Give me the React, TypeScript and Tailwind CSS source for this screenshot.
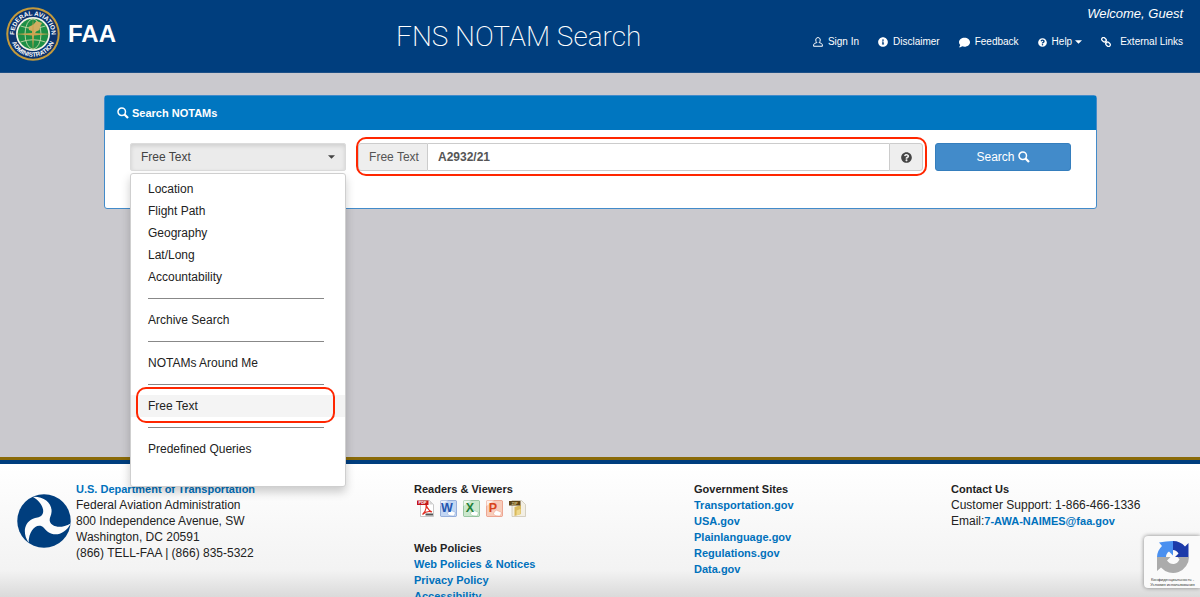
import { useState } from "react";
import type { ReactNode } from "react";
import { FaComment, FaInfoCircle, FaQuestionCircle } from "react-icons/fa";

const menuGroups = [
  ["Location", "Flight Path", "Geography", "Lat/Long", "Accountability"],
  ["Archive Search"],
  ["NOTAMs Around Me"],
  ["Free Text"],
  ["Predefined Queries"],
];

function FaaSeal() {
  return (
    <svg viewBox="0 0 108 108" className="size-[54px] shrink-0" aria-hidden="true">
      <defs>
        <path id="seal-top" d="M17 58a37.200 37.200 0 1 1 74 0" />
        <path id="seal-bottom" d="M8.500 54a45.500 45.500 0 0 0 91 0" />
      </defs>
      <circle cx="54" cy="54" r="53.500" fill="#c39a3c" />
      <circle cx="54" cy="54" r="49.500" fill="#0b3470" />
      <circle cx="54" cy="54" r="34" fill="#f4f3e6" />
      <circle cx="54" cy="54" r="30.500" fill="#1d8f45" />
      <g fill="none" stroke="#d8dfae" strokeWidth="1.600">
        <ellipse cx="54" cy="54" rx="16" ry="30" />
        <path d="M29 38q25 9 50 0M29 70q25-9 50 0" />
      </g>
      <path d="M45 40l10-5 6-7 11 4-4 8-1 6-7 3-4 7-4-8-6-2z" fill="#cfae62" />
      <path d="M54 22l2 30 34 2-34 3-2 31-2-31-34-3 34-2z" fill="#cba451" />
      <g fill="#ffffff" fontFamily="Liberation Sans, sans-serif" fontWeight="700" fontSize="12.500" textAnchor="middle">
        <text>
          <textPath href="#seal-top" startOffset="50%">FEDERAL AVIATION</textPath>
        </text>
        <text>
          <textPath href="#seal-bottom" startOffset="50%">ADMINISTRATION</textPath>
        </text>
      </g>
    </svg>
  );
}

function DotLogo() {
  return (
    <svg viewBox="-100 -100 200 200" className="size-[54px] shrink-0" aria-hidden="true">
      <circle r="99" fill="#003e7e" />
      <path
        fill="#fcfcfc"
        d="M-42-90C0-92 30-68 28-34C27-18 18-10 22 2C28 22 62 30 99 9C80 46 44 60 15 41C2 32 0 21-13 18C-33 13-57 39-57 81C-80 46-74 8-43-7C-29-14-18-11-9-20C5-35-5-69-42-90Z"
      />
    </svg>
  );
}

function SearchIcon({ className }: { className: string }) {
  return (
    <svg viewBox="0 0 24 24" className={className} fill="none" stroke="currentColor" aria-hidden="true">
      <circle cx="9.500" cy="9.500" r="7.500" strokeWidth="3" />
      <path d="M15 15l7 7" strokeWidth="4.500" />
    </svg>
  );
}

function UserIcon() {
  return (
    <svg viewBox="0 0 20 20" className="size-[10px]" fill="none" stroke="currentColor" strokeWidth="2" aria-hidden="true">
      <path d="M10 1.200c-2.800 0-4.500 2-4.500 4.800 0 2.300 1 4.200 2.300 5.100L3.500 12.600C2 13.300 1.200 14.500 1.200 18.500h17.600c0-4-.8-5.200-2.300-5.900l-4.300-1.500c1.300-.9 2.300-2.800 2.300-5.100 0-2.800-1.700-4.800-4.500-4.800z" />
    </svg>
  );
}

function LinkIcon() {
  return (
    <svg viewBox="0 0 20 20" className="size-[10px]" fill="none" stroke="currentColor" strokeWidth="2.400" aria-hidden="true">
      <rect x="1" y="2" width="10" height="7" rx="3.500" transform="rotate(45 6 5.500)" />
      <rect x="9" y="11" width="10" height="7" rx="3.500" transform="rotate(45 14 14.500)" />
      <path d="M7.500 7.500l5 5" />
    </svg>
  );
}

function Caret() {
  return (
    <svg viewBox="0 0 8 4" className="h-1 w-[7px]" fill="currentColor" aria-hidden="true">
      <path d="M0 0h8L4 4z" />
    </svg>
  );
}

function NavLink({ icon, children }: { icon: ReactNode; children: ReactNode }) {
  return (
    <a href="#" className="flex items-center gap-[5px] hover:underline">
      {icon}
      {children}
    </a>
  );
}

function OfficeIcon({ letter, color, tint }: { letter: string; color: string; tint: string }) {
  return (
    <svg viewBox="0 0 34 34" className="size-[17px]" aria-hidden="true">
      <rect x="1" y="1" width="32" height="32" rx="2" fill={tint} stroke={color} strokeOpacity="0.5" strokeWidth="1.500" />
      <path d="M1 33V12L16 1h-15z" fill="#fff" fillOpacity="0.7" />
      <path d="M15 27l5-7 11 5-3 7-10-1z" fill="#fff" stroke={color} strokeOpacity="0.4" />
      <text x="14" y="24" textAnchor="middle" fontFamily="Liberation Sans, sans-serif" fontWeight="700" fontSize="25" fill={color}>
        {letter}
      </text>
    </svg>
  );
}

function PdfIcon() {
  return (
    <svg viewBox="0 0 34 34" className="size-[17px]" aria-hidden="true">
      <path d="M7 1h18l8 8v24H7z" fill="#fff" stroke="#b5b5b5" strokeWidth="1.500" />
      <path d="M25 1v8h8z" fill="#d5d5d5" />
      <path d="M18 9c2 7 5 12 12 15-6-2-13-1-19 5 5-4 8-11 7-20z" fill="none" stroke="#e02b20" strokeWidth="2.200" />
      <rect x="0" y="1" width="23" height="9" fill="#c4161c" />
      <text x="11" y="8" textAnchor="middle" fontFamily="Liberation Sans, sans-serif" fontWeight="700" fontSize="8" fill="#fff">
        PDF
      </text>
      <rect x="17" y="27" width="15" height="4" fill="#555" />
    </svg>
  );
}

function ZipIcon() {
  return (
    <svg viewBox="0 0 34 34" className="size-[17px]" aria-hidden="true">
      <path d="M6 1h19l8 8v24H6z" fill="#f3efe4" stroke="#c9c3b2" strokeWidth="1.500" />
      <path d="M11 14l13-4v18l-13 4z" fill="#d9b95b" />
      <path d="M15 21l8-3v10l-8 3z" fill="#efd98e" />
      <rect x="0" y="2" width="23" height="9" fill="#5b4316" />
      <text x="11" y="9" textAnchor="middle" fontFamily="Liberation Sans, sans-serif" fontWeight="700" fontSize="8" fill="#d8c48c">
        ZIP
      </text>
    </svg>
  );
}

function RecaptchaBadge() {
  return (
    <aside className="absolute right-0 bottom-[9px] flex h-[52px] w-14 flex-col items-center rounded-l-sm bg-[#fafafa] pt-[5px] pl-px shadow-[0_0_4px_#808080]">
      <svg viewBox="0 0 64 64" className="size-8" aria-hidden="true">
        <path d="M0 32A32 32 0 0 1 10 10L4 3Q18 0 32 0V29L24 21Q18 25 18 32Z" fill="#4a90f0" />
        <path d="M32 0A32 32 0 0 1 56 11L63 4V32H36L43 25Q39 18 32 18Z" fill="#1c3aa9" />
        <path d="M0 32H27L20 39Q26 47 34 46Q41 45 45 37L41 32H64A32 32 0 0 1 8 53L0 60Z" fill="#ababab" />
      </svg>
      <p className="mt-1 text-center text-[4px] leading-[5px] whitespace-nowrap text-[#333]">
        Конфиденциальность -
        <br />
        Условия использования
      </p>
    </aside>
  );
}

function FooterLink({ children }: { children: ReactNode }) {
  return (
    <a href="#" className="block text-[11px] font-bold text-[#0071bc] hover:underline">
      {children}
    </a>
  );
}

function FooterHeading({ children }: { children: ReactNode }) {
  return <h2 className="text-[11px] leading-4 font-bold">{children}</h2>;
}

export default function App() {
  const [mode, setMode] = useState("Free Text");
  const [open, setOpen] = useState(true);
  const [query, setQuery] = useState("A2932/21");

  return (
    <div className="relative flex h-screen flex-col overflow-hidden bg-[#cac9ce] font-['Liberation_Sans',Arial,sans-serif] text-xs text-[#222]">
      <header className="flex h-[73px] shrink-0 border-b border-[#1c4f86] bg-[#003e7e] text-white">
        <div className="flex w-[33%] items-center gap-2 pb-[5px] pl-[6px]">
          <FaaSeal />
          <span className="text-2xl font-bold">FAA</span>
        </div>
        <h1 className="flex items-center pt-[2px] font-['Roboto',sans-serif] text-[28px] font-extralight whitespace-nowrap">FNS NOTAM Search</h1>
        <div className="ml-auto flex flex-col items-end gap-[11px] pt-[6px] pr-[17px]">
          <p className="text-[13px] leading-4 italic">Welcome, Guest</p>
          <nav className="flex gap-[19px] text-[10px] leading-[18px]">
            <NavLink icon={<UserIcon />}>Sign In</NavLink>
            <NavLink icon={<FaInfoCircle className="size-[10px]" />}>Disclaimer</NavLink>
            <NavLink icon={<FaComment className="size-[11px]" />}>Feedback</NavLink>
            <NavLink icon={<FaQuestionCircle className="size-[9px]" />}>
              <span className="flex items-center gap-[3px]">
                Help
                <Caret />
              </span>
            </NavLink>
            <NavLink icon={<LinkIcon />}>
              <span className="pl-1">External Links</span>
            </NavLink>
          </nav>
        </div>
      </header>

      <main className="h-[384px] shrink-0 pt-[22px] pr-[103px] pl-[104px]">
        <section className="rounded-[3px] border border-[#428bca] bg-white">
          <h2 className="flex h-[34px] items-center gap-[3px] bg-[#0076c0] pl-3 text-[11px] font-bold text-white">
            <SearchIcon className="size-3" />
            Search NOTAMs
          </h2>
          <form className="flex gap-[10px] px-[25px] pt-[13px] pb-[37px]" onSubmit={(e) => e.preventDefault()}>
            <div className="relative mr-[2px] w-[216px] shrink-0">
              <button
                type="button"
                aria-haspopup="menu"
                aria-expanded={open}
                onClick={() => setOpen(!open)}
                className="flex h-7 w-full items-center justify-between rounded-[2px] border border-[#dcdcdc] bg-[#ebebeb] px-[10px] text-[#444] shadow-[inset_0_2px_4px_rgba(0,0,0,0.12)]"
              >
                {mode}
                <Caret />
              </button>
              {open && (
                <div
                  role="menu"
                  className="absolute top-[30px] left-0 z-10 w-full rounded-[3px] border border-[#cfcfcf] bg-white pt-1 pb-[26px] shadow-[0_5px_10px_rgba(0,0,0,0.2)]"
                >
                  {menuGroups.map((group, i) => (
                    <div key={group[0]}>
                      {i > 0 && (
                        <div role="separator" className="flex h-[21px] items-center pr-[21px] pl-[17px]">
                          <div className="h-px w-full bg-[#888]" />
                        </div>
                      )}
                      {group.map((item) => (
                        <div key={item} className="relative">
                          <button
                            type="button"
                            role="menuitem"
                            onClick={() => {
                              setMode(item);
                              setOpen(false);
                            }}
                            className={
                              item === mode
                                ? "block h-[22px] w-full bg-[#f4f4f4] pl-[17px] text-left"
                                : "block h-[22px] w-full bg-white pl-[17px] text-left hover:bg-[#f4f4f4]"
                            }
                          >
                            {item}
                          </button>
                          {item === "Free Text" && (
                            <span className="pointer-events-none absolute -top-[8px] right-[10px] -bottom-[6px] left-[5px] rounded-[10px] border-2 border-[#ff2600]" />
                          )}
                        </div>
                      ))}
                    </div>
                  ))}
                </div>
              )}
            </div>

            <div className="relative flex h-7 min-w-0 flex-1 pr-[2px]">
              <label
                htmlFor="free-text"
                className="flex w-[70px] shrink-0 items-center justify-center rounded-l-[3px] border border-[#ccc] bg-[#eee] pl-[2px] text-[#555]"
              >
                Free Text
              </label>
              <input
                id="free-text"
                type="text"
                value={query}
                onChange={(e) => setQuery(e.target.value)}
                className="min-w-0 flex-1 border-y border-[#ccc] bg-white px-[10px] font-bold text-[#555] outline-none"
              />
              <button
                type="button"
                aria-label="Free text help"
                className="flex w-[34px] shrink-0 items-center justify-center rounded-r-[3px] border border-[#ccc] bg-[#eee] text-[#444]"
              >
                <FaQuestionCircle className="size-[11px]" />
              </button>
              <span className="pointer-events-none absolute -inset-x-[2px] -top-[6px] -bottom-[5px] rounded-[10px] border-2 border-[#ff2600]" />
            </div>

            <button
              type="submit"
              className="flex h-7 w-[136px] shrink-0 items-center justify-center gap-[3px] rounded-[3px] border border-[#357ebd] bg-[#428bca] text-white"
            >
              Search
              <SearchIcon className="size-3" />
            </button>
          </form>
        </section>
      </main>

      <footer className="grid min-h-0 flex-1 grid-cols-[414fr_280fr_257fr_249fr] overflow-hidden border-t-[3px] border-[#8a6a08] bg-[linear-gradient(to_bottom,#003e7e_0,#003e7e_4px,#ffffff_4px,#f3f3f3_110px,#dadada_137px)] pt-[21px] leading-4">
        <div className="flex gap-[5px] pl-[17px]">
          <div className="pt-[13px]">
            <DotLogo />
          </div>
          <address className="not-italic">
            <FooterLink>U.S. Department of Transportation</FooterLink>
            Federal Aviation Administration
            <br />
            800 Independence Avenue, SW
            <br />
            Washington, DC 20591
            <br />
            (866) TELL-FAA | (866) 835-5322
          </address>
        </div>
        <div>
          <FooterHeading>Readers &amp; Viewers</FooterHeading>
          <div className="mt-[3px] mb-[23px] flex gap-[6px] pl-[3px]">
            <a href="#" aria-label="PDF reader">
              <PdfIcon />
            </a>
            <a href="#" aria-label="Word viewer">
              <OfficeIcon letter="W" color="#2456b0" tint="#c3d6f3" />
            </a>
            <a href="#" aria-label="Excel viewer">
              <OfficeIcon letter="X" color="#23803a" tint="#cbe8cd" />
            </a>
            <a href="#" aria-label="PowerPoint viewer">
              <OfficeIcon letter="P" color="#d9431c" tint="#f8cdbb" />
            </a>
            <a href="#" aria-label="Zip reader">
              <ZipIcon />
            </a>
          </div>
          <FooterHeading>Web Policies</FooterHeading>
          <FooterLink>Web Policies &amp; Notices</FooterLink>
          <FooterLink>Privacy Policy</FooterLink>
          <FooterLink>Accessibility</FooterLink>
        </div>
        <div>
          <FooterHeading>Government Sites</FooterHeading>
          <FooterLink>Transportation.gov</FooterLink>
          <FooterLink>USA.gov</FooterLink>
          <FooterLink>Plainlanguage.gov</FooterLink>
          <FooterLink>Regulations.gov</FooterLink>
          <FooterLink>Data.gov</FooterLink>
        </div>
        <div>
          <FooterHeading>Contact Us</FooterHeading>
          <p>Customer Support: 1-866-466-1336</p>
          <p className="flex">
            Email:
            <FooterLink>7-AWA-NAIMES@faa.gov</FooterLink>
          </p>
        </div>
      </footer>

      <RecaptchaBadge />
    </div>
  );
}
